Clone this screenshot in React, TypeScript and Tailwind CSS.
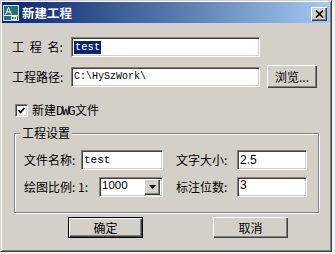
import React from "react";

const sunken =
  "bg-white border border-t-[#808080] border-l-[#808080] border-r-white border-b-white shadow-[inset_1px_1px_#404040,inset_-1px_-1px_#d4d0c8]";

function Input({ w, children, h = "h-[20px]" }: { w: string; children?: React.ReactNode; h?: string }) {
  return (
    <div className={`${w} ${h} ${sunken} flex items-center pl-[2px] overflow-hidden`}>{children}</div>
  );
}

function Btn({ w, h, children, def }: { w: string; h: string; children: React.ReactNode; def?: boolean }) {
  return (
    <div
      className={`${w} ${h} flex items-center justify-center bg-[#d4d0c8] ${
        def
          ? "border border-black shadow-[inset_1px_1px_#ffffff,inset_-1px_-1px_#404040,inset_-2px_-2px_#808080]"
          : "shadow-[inset_1px_1px_#ffffff,inset_-1px_-1px_#404040,inset_-2px_-2px_#808080]"
      }`}
    >
      {children}
    </div>
  );
}

export default function App() {
  return (
    <div className="w-[335px] h-[254px] bg-[#f2f2f0] font-['Noto_Sans_CJK_SC',sans-serif] text-[12px] leading-[14px] text-black">
      <div className="w-[332px] h-[252px] bg-[#d4d0c8] border border-t-[#d4d0c8] border-l-[#d4d0c8] border-r-[#404040] border-b-[#404040] shadow-[inset_1px_1px_#ffffff,inset_-1px_-1px_#808080] p-[1px] flex flex-col">
        {/* Title bar */}
        <div className="h-[21px] flex items-center bg-linear-to-r from-[#0a246a] to-[#a6caf0] pl-[1px] pr-[3px]">
          <svg width="16" height="16" viewBox="0 0 16 16" className="shrink-0">
            <rect x="0" y="0" width="16" height="16" fill="#2b6f74" />
            <rect x="0.5" y="0.5" width="15" height="15" fill="none" stroke="#cfe3e3" strokeWidth="1" />
            <path d="M2.5 9.5 L5.5 2.5 L8.5 9.5 M4 7 H7" stroke="#ffffff" strokeWidth="1" fill="none" />
            <path d="M1 10.5 H15" stroke="#ffffff" strokeWidth="1" />
            <rect x="8.5" y="11.5" width="5" height="3" fill="none" stroke="#ffffff" strokeWidth="1" />
            <path d="M11 10 V15" stroke="#ffffff" strokeWidth="1" />
          </svg>
          <span className="ml-[3px] text-white font-bold text-[12.5px] leading-[14px]">新建工程</span>
          <div className="ml-auto self-start mt-[5px] w-[16px] h-[14px] bg-[#d4d0c8] shadow-[inset_1px_1px_#ffffff,inset_-1px_-1px_#404040,inset_-2px_-2px_#808080] flex items-center justify-center">
            <svg width="9" height="8" viewBox="0 0 9 8">
              <path d="M1 0.5 L8 7.5 M8 0.5 L1 7.5" stroke="#000" strokeWidth="1.6" />
            </svg>
          </div>
        </div>

        {/* Content */}
        <div className="flex flex-col pl-[10px]">
          <div className="mt-[14px] h-[20px] flex items-center">
            <span className="w-[59px] whitespace-pre [word-spacing:3px]">工 程 名:</span>
            <Input w="w-[189px]">
              <span className="bg-[#0a246a] text-white font-['Liberation_Mono',monospace] text-[10.5px] leading-[13px] px-[1px]">
                test
              </span>
            </Input>
          </div>

          <div className="mt-[8px] h-[23px] flex items-center">
            <span className="w-[59px]">工程路径:</span>
            <Input w="w-[189px]">
              <span className="font-['Liberation_Mono',monospace] text-[10px] leading-[13px]">C:\HySzWork\</span>
            </Input>
            <div className="ml-[7px]">
              <Btn w="w-[50px]" h="h-[23px]">
                <span>浏览...</span>
              </Btn>
            </div>
          </div>

          <div className="mt-[16px] h-[13px] flex items-center">
            <div className={`ml-[3px] w-[13px] h-[13px] ${sunken} flex items-center justify-center`}>
              <svg width="9" height="9" viewBox="0 0 9 9">
                <path d="M1.5 4 L3.5 6.5 L7.5 2" stroke="#000" strokeWidth="1.7" fill="none" />
              </svg>
            </div>
            <span className="ml-[4px]">
              新建<span className="font-['Liberation_Mono',monospace] text-[12.5px] tracking-[-1.5px]">DWG</span>
              <span className="ml-[1px]">文件</span>
            </span>
          </div>

          {/* Group box */}
          <div className="relative ml-[2px] mt-[16px] w-[305px] border border-[#808080] shadow-[inset_1px_1px_#ffffff,1px_1px_#ffffff] pl-[9px] pt-[16px] pb-[15px]">
            <span className="absolute -top-[8px] left-[5px] px-[2px] bg-[#d4d0c8]">工程设置</span>
            <div className="h-[20px] flex items-center">
              <span className="w-[57px]">文件名称:</span>
              <Input w="w-[82px]">
                <span className="font-['Liberation_Mono',monospace] text-[11px] leading-[13px]">test</span>
              </Input>
              <span className="ml-[13px] w-[61px]">文字大小:</span>
              <Input w="w-[70px]">
                <span className="font-['Liberation_Sans',sans-serif] text-[12px] leading-[13px]">2.5</span>
              </Input>
            </div>
            <div className="mt-[7px] h-[20px] flex items-center">
              <span className="w-[75px] whitespace-pre">绘图比例: 1:</span>
              <div className={`w-[64px] h-[20px] ${sunken} flex items-center pl-[2px] pr-[2px]`}>
                <span className="font-['Liberation_Sans',sans-serif] text-[11.5px] leading-[13px] flex-1 self-start mt-[1px]">1000</span>
                <div className="w-[16px] h-[16px] bg-[#d4d0c8] shadow-[inset_1px_1px_#ffffff,inset_-1px_-1px_#404040,inset_-2px_-2px_#808080] flex items-center justify-center">
                  <svg width="7" height="4" viewBox="0 0 7 4">
                    <path d="M0 0 H7 L3.5 4 Z" fill="#000" />
                  </svg>
                </div>
              </div>
              <span className="ml-[13px] w-[61px]">标注位数:</span>
              <Input w="w-[70px]">
                <span className="font-['Liberation_Sans',sans-serif] text-[12px] leading-[13px] self-start mt-[1px]">3</span>
              </Input>
            </div>
          </div>

          {/* Buttons */}
          <div className="mt-[4px] ml-[56px] flex">
            <Btn w="w-[75px]" h="h-[21px]" def>
              <span>确定</span>
            </Btn>
            <div className="ml-[70px]">
              <Btn w="w-[75px]" h="h-[21px]">
                <span>取消</span>
              </Btn>
            </div>
          </div>
        </div>
      </div>
    </div>
  );
}
